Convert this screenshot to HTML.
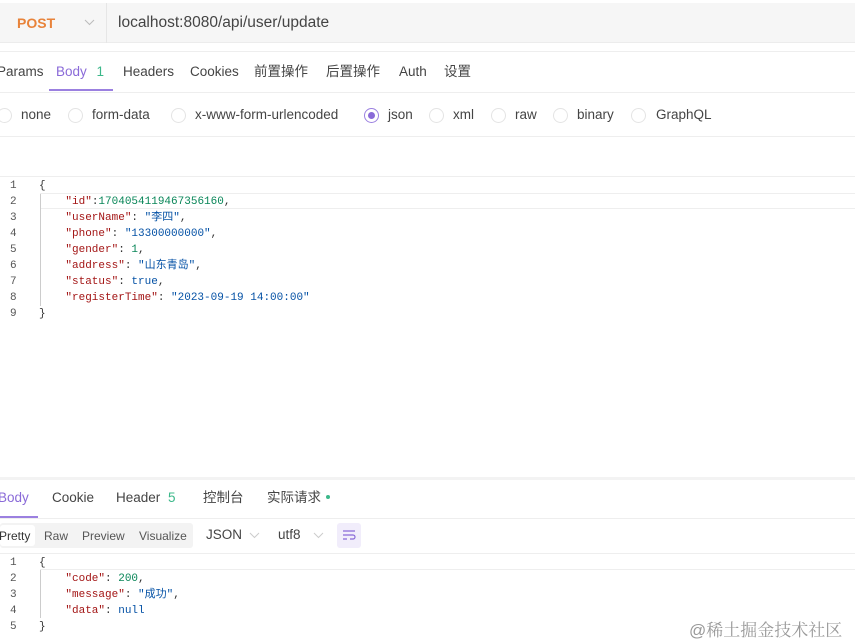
<!DOCTYPE html>
<html><head><meta charset="utf-8"><style>
*{margin:0;padding:0;box-sizing:border-box}
body{width:855px;height:644px;overflow:hidden;background:#fff;font-family:"Liberation Sans","Noto Sans CJK SC",sans-serif;color:#333;position:relative}
.a{position:absolute;white-space:nowrap}
.t{font-size:13.5px;color:#444;line-height:18px;height:18px}
.t span{line-height:18px}
.code{font-family:"Liberation Mono","Noto Sans CJK SC",monospace;font-size:11px;line-height:16px}
.code div{height:16px;line-height:16px}
.k{color:#a31515}.s{color:#0451a5}.n{color:#098658}.p{color:#333}
.ln{color:#555;font-family:"Liberation Mono",monospace;font-size:11px;line-height:16px}
.r{position:absolute;width:15px;height:15px;border:1px solid #e4e4e4;border-radius:50%}
</style></head><body>
<div class="a" style="left:0;top:3px;width:855px;height:40px;background:#f6f6f6;border-bottom:1px solid #ececec"></div>
<div class="a" style="left:106px;top:3px;width:1px;height:40px;background:#e6e6e6"></div>
<div class="a" style="left:17px;top:15px;font-size:14px;font-weight:bold;color:#e8833a">POST</div>
<svg class="a" style="left:84px;top:19px" width="11" height="7"><path d="M1 1l4.5 4.5L10 1" stroke="#bbb" fill="none"/></svg>
<div class="a" style="left:118px;top:14px;font-size:15.5px;color:#444">localhost:8080/api/user/update</div>
<div class="a" style="left:0;top:51px;width:855px;height:1px;background:#eee"></div>
<div class="a t" style="left:-3px;top:63px">Params</div>
<div class="a t" style="left:56px;top:63px;color:#8a6ad8">Body <span style="color:#3cb88a;margin-left:6px">1</span></div>
<div class="a" style="left:49px;top:89px;width:64px;height:2px;background:#9b80e0"></div>
<div class="a t" style="left:123px;top:63px">Headers</div>
<div class="a t" style="left:190px;top:63px">Cookies</div>
<div class="a t" style="left:254px;top:63px">前置操作</div>
<div class="a t" style="left:326px;top:63px">后置操作</div>
<div class="a t" style="left:399px;top:63px">Auth</div>
<div class="a t" style="left:444px;top:63px">设置</div>
<div class="a" style="left:0;top:92px;width:855px;height:1px;background:#eee"></div>
<div class="r" style="left:-3px;top:108px"></div><div class="a t" style="left:21px;top:106px">none</div>
<div class="r" style="left:68px;top:108px"></div><div class="a t" style="left:92px;top:106px">form-data</div>
<div class="r" style="left:171px;top:108px"></div><div class="a t" style="left:195px;top:106px">x-www-form-urlencoded</div>
<div class="r" style="left:364px;top:108px;border-color:#9b80e0"><div style="position:absolute;left:3px;top:3px;width:7px;height:7px;border-radius:50%;background:#8a6ad8"></div></div><div class="a t" style="left:388px;top:106px">json</div>
<div class="r" style="left:429px;top:108px"></div><div class="a t" style="left:453px;top:106px">xml</div>
<div class="r" style="left:491px;top:108px"></div><div class="a t" style="left:515px;top:106px">raw</div>
<div class="r" style="left:553px;top:108px"></div><div class="a t" style="left:577px;top:106px">binary</div>
<div class="r" style="left:631px;top:108px"></div><div class="a t" style="left:656px;top:106px">GraphQL</div>
<div class="a" style="left:0;top:136px;width:855px;height:1px;background:#eee"></div>
<div class="a" style="left:0;top:176px;width:855px;height:1px;background:#eee"></div>
<div class="a" style="left:40px;top:193px;width:815px;height:16px;border-top:1px solid #eee;border-bottom:1px solid #eee"></div>
<div class="a" style="left:40px;top:194px;width:1px;height:112px;background:#ccc"></div>
<div class="a ln" style="left:10px;top:178px">1<br>2<br>3<br>4<br>5<br>6<br>7<br>8<br>9</div>
<div class="a code" style="left:39px;top:178px"><div class="p">{</div>
<div>&nbsp;&nbsp;&nbsp;&nbsp;<span class="k">"id"</span>:<span class="n">1704054119467356160</span>,</div>
<div>&nbsp;&nbsp;&nbsp;&nbsp;<span class="k">"userName"</span>: <span class="s">"李四"</span>,</div>
<div>&nbsp;&nbsp;&nbsp;&nbsp;<span class="k">"phone"</span>: <span class="s">"13300000000"</span>,</div>
<div>&nbsp;&nbsp;&nbsp;&nbsp;<span class="k">"gender"</span>: <span class="n">1</span>,</div>
<div>&nbsp;&nbsp;&nbsp;&nbsp;<span class="k">"address"</span>: <span class="s">"山东青岛"</span>,</div>
<div>&nbsp;&nbsp;&nbsp;&nbsp;<span class="k">"status"</span>: <span class="s">true</span>,</div>
<div>&nbsp;&nbsp;&nbsp;&nbsp;<span class="k">"registerTime"</span>: <span class="s">"2023-09-19 14:00:00"</span></div>
<div class="p">}</div></div>
<div class="a" style="left:0;top:477px;width:855px;height:3px;background:#f3f3f3"></div>
<div class="a t" style="left:-2px;top:489px;color:#8a6ad8">Body</div>
<div class="a" style="left:0;top:516px;width:38px;height:2px;background:#9b80e0"></div>
<div class="a t" style="left:52px;top:489px">Cookie</div>
<div class="a t" style="left:116px;top:489px">Header <span style="color:#3cb88a;margin-left:4px">5</span></div>
<div class="a t" style="left:203px;top:489px">控制台</div>
<div class="a t" style="left:267px;top:489px">实际请求</div>
<div class="a" style="left:326px;top:495px;width:4px;height:4px;border-radius:50%;background:#3cb88a"></div>
<div class="a" style="left:0;top:518px;width:855px;height:1px;background:#eee"></div>
<div class="a" style="left:0;top:523px;width:193px;height:25px;background:#f3f3f3;border-radius:3px"></div>
<div class="a" style="left:0;top:525px;width:35px;height:21px;background:#fff;border-radius:3px"></div>
<div class="a" style="left:-1px;top:529px;font-size:12px;color:#333">Pretty</div>
<div class="a" style="left:44px;top:529px;font-size:12px;color:#555">Raw</div>
<div class="a" style="left:82px;top:529px;font-size:12px;color:#555">Preview</div>
<div class="a" style="left:139px;top:529px;font-size:12px;color:#555">Visualize</div>
<div class="a t" style="left:206px;top:526px">JSON</div>
<svg class="a" style="left:249px;top:532px" width="11" height="7"><path d="M1 1l4.5 4.5L10 1" stroke="#ccc" fill="none"/></svg>
<div class="a t" style="left:278px;top:526px">utf8</div>
<svg class="a" style="left:313px;top:532px" width="11" height="7"><path d="M1 1l4.5 4.5L10 1" stroke="#ccc" fill="none"/></svg>
<div class="a" style="left:337px;top:523px;width:24px;height:25px;background:#f1edfb;border-radius:3px"></div>
<svg class="a" style="left:342px;top:529px" width="14" height="12"><path d="M1 2h12M1 6h10a2 2 0 0 1 0 4H8M1 10h4" stroke="#8a6ad8" fill="none" stroke-width="1.2"/></svg>
<div class="a" style="left:0;top:553px;width:855px;height:1px;background:#eee"></div>
<div class="a" style="left:40px;top:569px;width:815px;height:1px;background:#eee"></div>
<div class="a" style="left:40px;top:570px;width:1px;height:48px;background:#ccc"></div>
<div class="a ln" style="left:10px;top:555px">1<br>2<br>3<br>4<br>5</div>
<div class="a code" style="left:39px;top:555px"><div class="p">{</div>
<div>&nbsp;&nbsp;&nbsp;&nbsp;<span class="k">"code"</span>: <span class="n">200</span>,</div>
<div>&nbsp;&nbsp;&nbsp;&nbsp;<span class="k">"message"</span>: <span class="s">"成功"</span>,</div>
<div>&nbsp;&nbsp;&nbsp;&nbsp;<span class="k">"data"</span>: <span class="s">null</span></div>
<div class="p">}</div></div>
<div class="a" style="left:689px;top:616px;font-size:17px;color:#999;font-family:'Liberation Sans','Noto Serif CJK SC',serif">@稀土掘金技术社区</div>
</body></html>
